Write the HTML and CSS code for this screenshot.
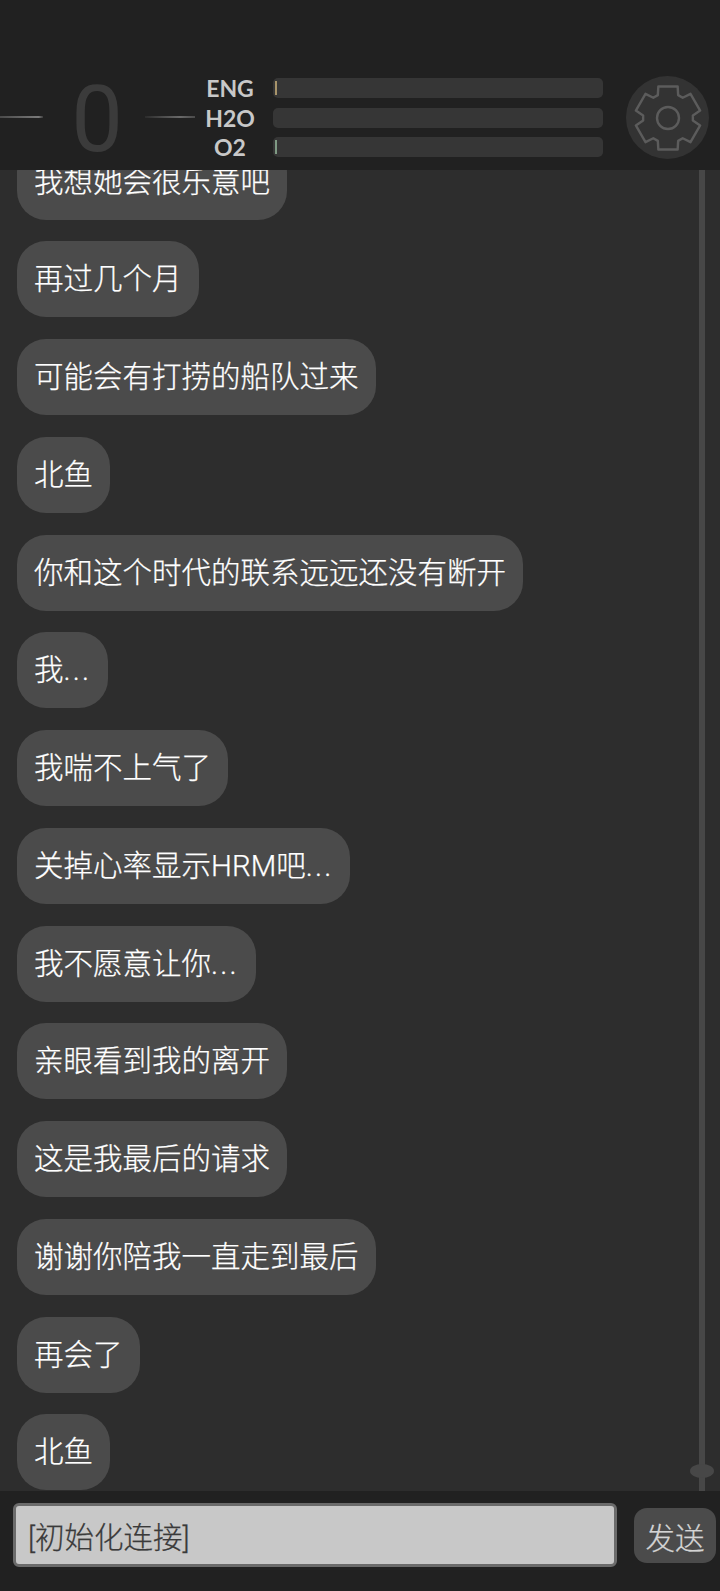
FILE: index.html
```html
<!DOCTYPE html>
<html lang="zh-CN">
<head>
    <meta charset="UTF-8">
    <meta name="viewport" content="width=device-width, initial-scale=1.0">
    <title>Chat</title>
    <link rel="stylesheet" href="styles.css">
</head>
<body>

<div class="app">
    <!-- Status header -->
    <header class="status">
        <div class="rate">
            <span class="rate-line line-left"></span>
            <span class="rate-num">0</span>
            <span class="rate-line line-right"></span>
        </div>
        <div class="meters">
            <span class="meter-label">ENG</span>
            <div class="meter"><div class="meter-fill fill-eng"></div></div>
            <span class="meter-label">H2O</span>
            <div class="meter"></div>
            <span class="meter-label">O2</span>
            <div class="meter"><div class="meter-fill fill-o2"></div></div>
        </div>
        <button class="settings" aria-label="settings">
            <svg viewBox="-41 -41 82 82" width="82" height="82" fill="none" stroke="#5c5c5c" stroke-width="2.4" stroke-linejoin="round">
                <polygon points="-9.65,-31.56 9.65,-31.56 10.17,-22.84 14.69,-20.23 22.5,-24.13 32.15,-7.42 24.86,-2.61 24.86,2.61 32.15,7.42 22.5,24.13 14.69,20.23 10.17,22.84 9.65,31.56 -9.65,31.56 -10.17,22.84 -14.69,20.23 -22.5,24.13 -32.15,7.42 -24.86,2.61 -24.86,-2.61 -32.15,-7.42 -22.5,-24.13 -14.69,-20.23 -10.17,-22.84"/>
                <circle cx="0" cy="0" r="11"/>
            </svg>
        </button>
    </header>

    <!-- Messages -->
    <main class="chat">
        <div class="messages">
            <div class="bubble">我想她会很乐意吧</div>
            <div class="bubble">再过几个月</div>
            <div class="bubble">可能会有打捞的船队过来</div>
            <div class="bubble">北鱼</div>
            <div class="bubble">你和这个时代的联系远远还没有断开</div>
            <div class="bubble">我<span class="dots">...</span></div>
            <div class="bubble">我喘不上气了</div>
            <div class="bubble">关掉心率显示HRM吧<span class="dots">...</span></div>
            <div class="bubble">我不愿意让你<span class="dots">...</span></div>
            <div class="bubble">亲眼看到我的离开</div>
            <div class="bubble">这是我最后的请求</div>
            <div class="bubble">谢谢你陪我一直走到最后</div>
            <div class="bubble">再会了</div>
            <div class="bubble">北鱼</div>
        </div>
        <div class="scrollbar"><span class="scroll-thumb"></span></div>
    </main>

    <!-- Input -->
    <footer class="composer">
        <input class="composer-input" type="text" value="[初始化连接]">
        <button class="send">发送</button>
    </footer>
</div>

</body>
</html>
```

FILE: styles.css
```css
* {
    box-sizing: border-box;
}
html, body {
    margin: 0;
    padding: 0;
    height: 100%;
}
body {
    font-family: Roboto, "Noto Sans CJK SC", sans-serif;
    font-weight: 300;
    background-color: #212121;
}
.app {
    display: flex;
    flex-direction: column;
    height: 1591px;
    overflow: hidden;
}
.status {
    height: 170px;
    flex: none;
    background-color: #212121;
    padding: 76px 0 0 0;
    display: flex;
    align-items: flex-start;
    position: relative;
    z-index: 1;
}
.rate {
    width: 195px;
    height: 84px;
    display: flex;
    align-items: center;
    justify-content: space-between;
}
.rate-line {
    height: 2px;
    margin-top: -2px;
}
.line-left {
    width: 43px;
    background: linear-gradient(to right, #4a4a4a, #7a7a7a 90%, #3a3a3a);
}
.line-right {
    width: 50px;
    background: linear-gradient(to right, #2c2c2c, #6a6a6a 70%, #4a4a4a);
}
.rate-num {
    margin: 4px 0 0 6px;
    font-family: Roboto, sans-serif;
    font-weight: 400;
    font-size: 92px;
    line-height: 84px;
    color: #3b3b3b;
}
.meters {
    width: 410px;
    margin: 2px 0 0 8px;
    display: grid;
    grid-template-columns: 70px 330px;
    row-gap: 9.6px;
    align-items: center;
}
.meter-label {
    font-family: "Lato", sans-serif;
    font-weight: 700;
    font-size: 23px;
    line-height: 20px;
    color: #c8c8c8;
    text-align: center;
    padding-right: 16px;
}
.meter {
    height: 20px;
    padding: 3px 0 3px 2px;
    background-color: #363636;
    border-radius: 5px;
}
.meter-fill {
    width: 2px;
    height: 100%;
}
.fill-eng {
    background-color: #a8946a;
}
.fill-o2 {
    background-color: #7f9a84;
}
.settings {
    width: 83px;
    height: 83px;
    margin-left: 13px;
    padding: 0;
    border: none;
    border-radius: 50%;
    background-color: #333;
    display: flex;
    align-items: center;
    justify-content: center;
}
.chat {
    flex: 1;
    min-height: 0;
    background-color: #2d2d2d;
    position: relative;
    overflow: hidden;
}
.messages {
    display: flex;
    flex-direction: column;
    align-items: flex-start;
    gap: 21.75px;
    padding: 0 0 0 17px;
    margin-top: -26.5px;
}
.bubble {
    height: 76px;
    padding: 0 17px;
    border-radius: 29px;
    background-color: #4b4b4b;
    color: #fff;
    font-size: 29.5px;
    line-height: 76px;
    white-space: nowrap;
    -webkit-text-stroke: 0.25px #fff;
}
.dots {
    letter-spacing: 2.2px;
}
.scrollbar {
    position: absolute;
    top: 0;
    bottom: 0;
    right: 15px;
    width: 6px;
    background-color: #474747;
}
.scroll-thumb {
    position: absolute;
    left: -9px;
    bottom: 13px;
    width: 24px;
    height: 14px;
    border-radius: 50%;
    background-color: #474747;
}
.composer {
    height: 100px;
    flex: none;
    background-color: #212121;
    display: flex;
    align-items: flex-start;
    padding: 12px 4px 0 13px;
}
.composer-input {
    width: 604px;
    height: 64px;
    padding: 0 12px;
    border: 3px solid #6b6b6b;
    border-radius: 6px;
    background-color: #c8c8c8;
    color: #3a3a3a;
    font-family: inherit;
    font-weight: 300;
    font-size: 29.5px;
    outline: none;
    -webkit-text-stroke: 0.25px #3a3a3a;
}
.send {
    width: 82px;
    height: 55px;
    margin: 5px 0 0 17px;
    padding: 0;
    border: none;
    border-radius: 13px;
    background-color: #4b4b4b;
    color: #d4d4d4;
    font-family: inherit;
    font-weight: 300;
    font-size: 29.5px;
    -webkit-text-stroke: 0.25px #d4d4d4;
}
```
